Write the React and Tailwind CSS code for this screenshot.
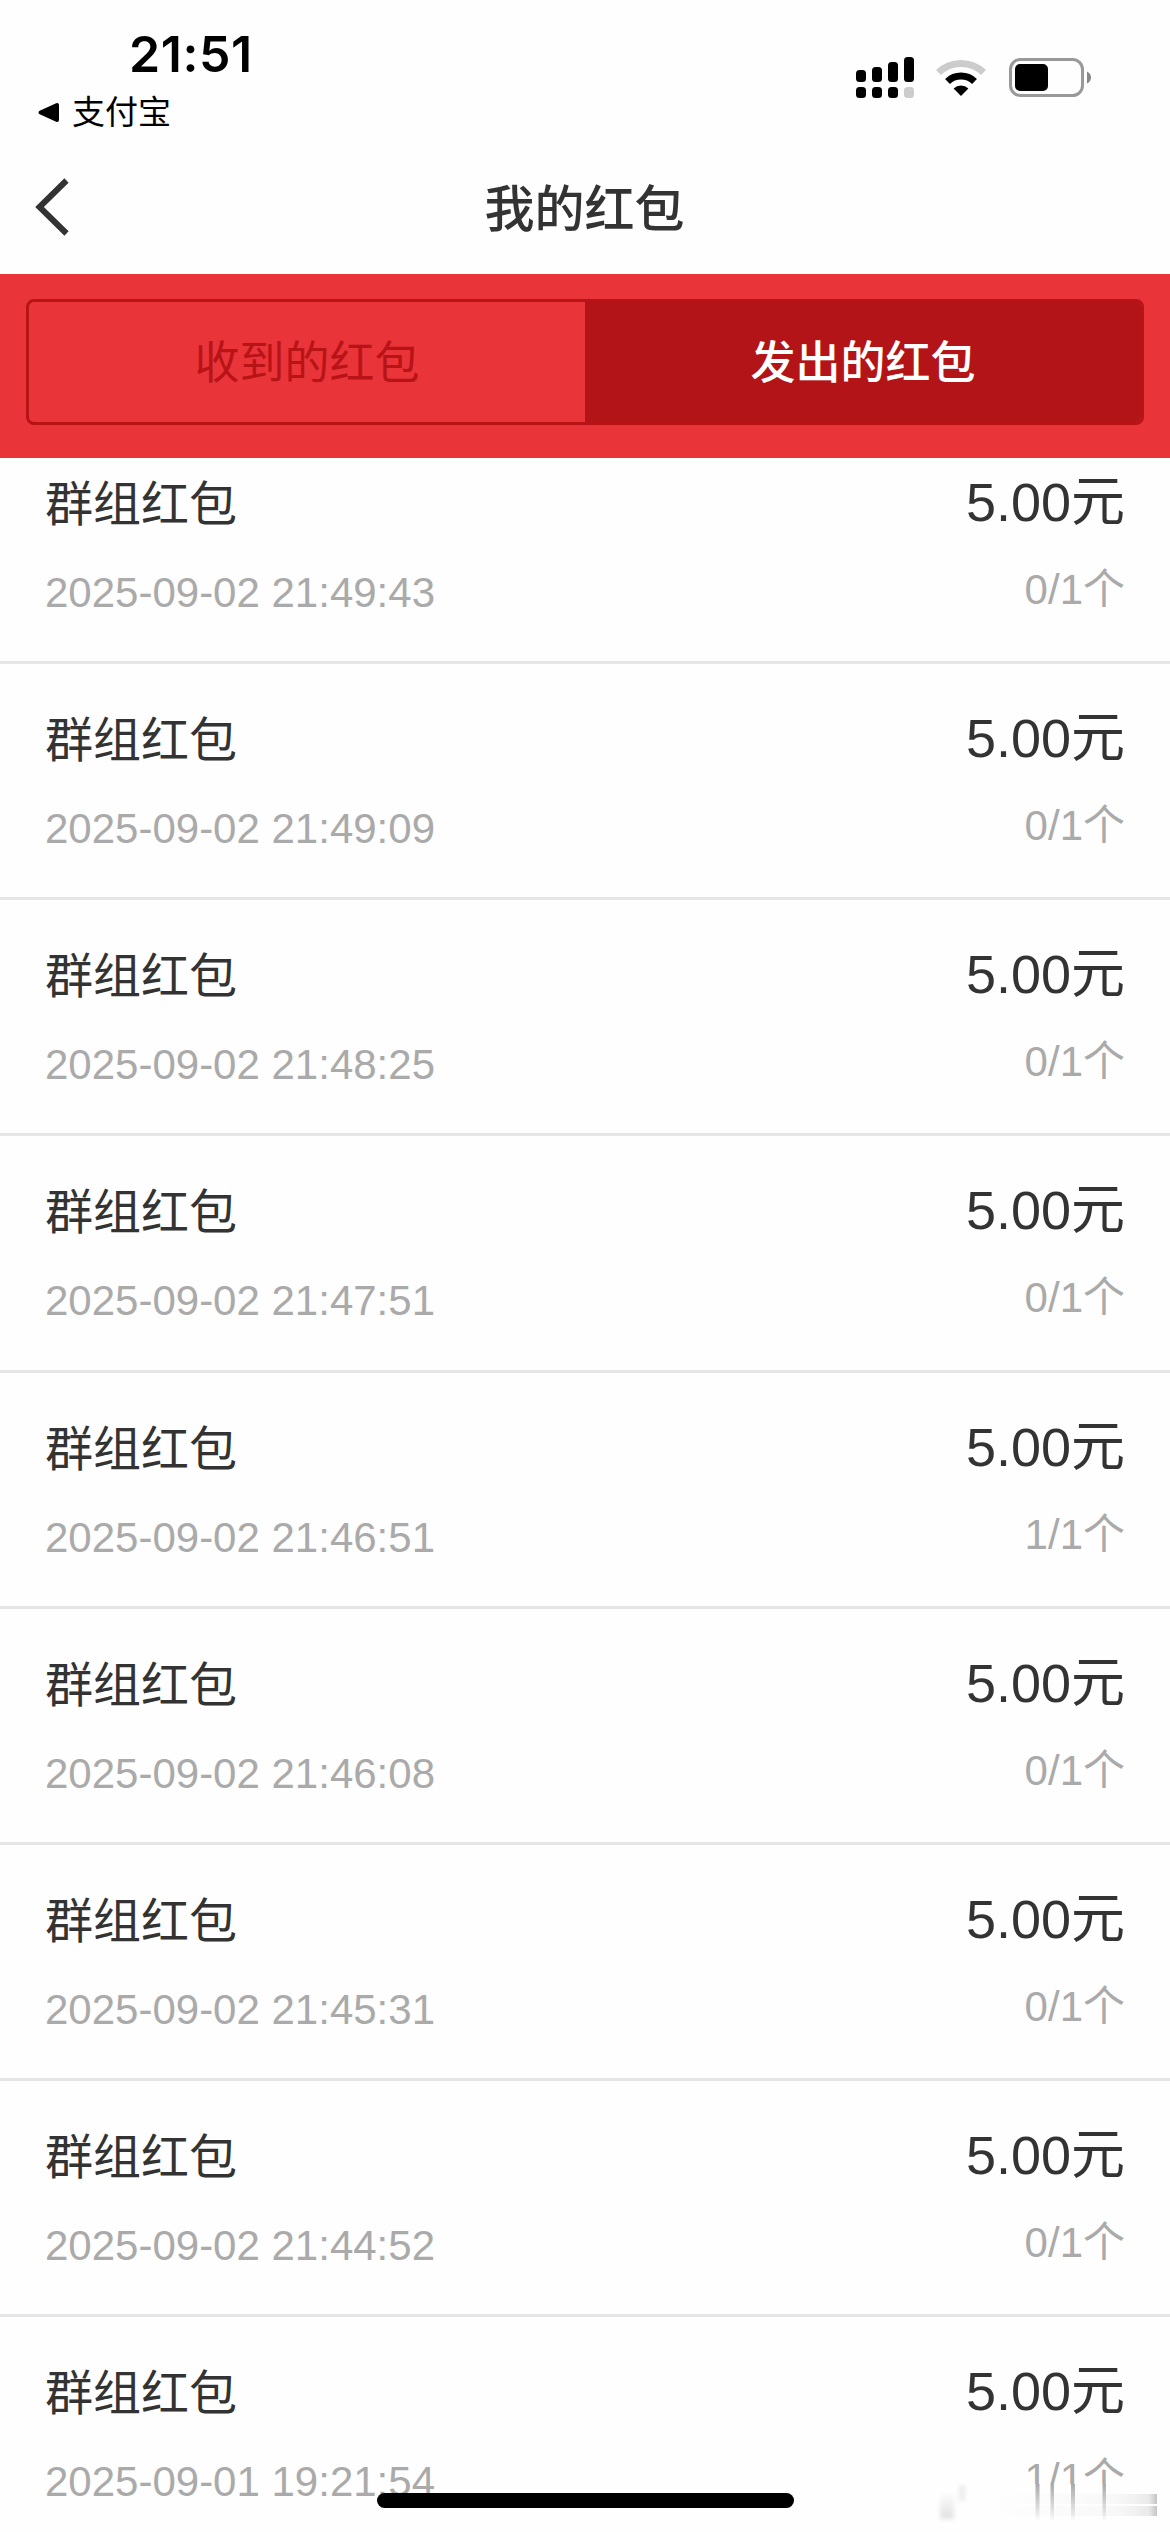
import React from "react";

const packets = [
  { time: "2025-09-02 21:49:43", count: "0/1个" },
  { time: "2025-09-02 21:49:09", count: "0/1个" },
  { time: "2025-09-02 21:48:25", count: "0/1个" },
  { time: "2025-09-02 21:47:51", count: "0/1个" },
  { time: "2025-09-02 21:46:51", count: "1/1个" },
  { time: "2025-09-02 21:46:08", count: "0/1个" },
  { time: "2025-09-02 21:45:31", count: "0/1个" },
  { time: "2025-09-02 21:44:52", count: "0/1个" },
  { time: "2025-09-01 19:21:54", count: "1/1个" },
];

const SignalIcon = () => (
  <svg width="58" height="42" viewBox="0 0 58 42">
    <rect x="0" y="13" width="10" height="12" rx="3.5" />
    <rect x="16" y="10" width="10" height="15" rx="3.5" />
    <rect x="32" y="5" width="10" height="20" rx="3.5" />
    <rect x="48" y="0" width="10" height="25" rx="3.5" />
    <rect x="0" y="30" width="10" height="11" rx="3.5" />
    <rect x="16" y="30" width="10" height="11" rx="3.5" />
    <rect x="32" y="30" width="10" height="11" rx="3.5" />
    <rect x="48" y="30" width="10" height="11" rx="3.5" fill="#ccc" />
  </svg>
);

const WifiIcon = () => (
  <svg width="50" height="38" viewBox="0 0 50 38" fill="none">
    <path d="M2.5 13.5A32.5 32.5 0 0 1 47.5 13.5" stroke="#ccc" strokeWidth="7" />
    <path d="M11.5 22.5A19.5 19.5 0 0 1 38.5 22.5" stroke="#000" strokeWidth="7" />
    <path d="M25 37L17.6 29.6A10.5 10.5 0 0 1 32.4 29.6Z" fill="#000" />
  </svg>
);

const BatteryIcon = () => (
  <svg width="82" height="39" viewBox="0 0 82 39">
    <rect x="1.5" y="1.5" width="72" height="36" rx="10" fill="none" stroke="#999" strokeWidth="3" />
    <rect x="6" y="6" width="33" height="27" rx="5" />
    <path d="M78 13.5Q82 15.5 82 19.5T78 25.5Z" fill="#888" />
  </svg>
);

const StatusBar = () => (
  <div className="h-[140px] flex justify-between text-black">
    <div className="pl-[37px] pt-[24px]">
      <div className="pl-[92px] h-[64px] leading-[60px] text-[50px] font-semibold tracking-[0.6px] font-[Inter,sans-serif]">
        21:51
      </div>
      <div className="flex items-center h-[48px] text-[33px] leading-[48px]">
        <svg width="24" height="21" viewBox="0 0 24 21" className="mr-[11px]">
          <path d="M3.5 10.5L20 3V18Z" stroke="#000" strokeWidth="4" strokeLinejoin="round" />
        </svg>
        <span className="pt-0.5">支付宝</span>
      </div>
    </div>
    <div className="flex items-start pt-[57px] pr-[79px]">
      <SignalIcon />
      <div className="ml-[22px] mt-0.5">
        <WifiIcon />
      </div>
      <div className="ml-[23px] mt-px">
        <BatteryIcon />
      </div>
    </div>
  </div>
);

const NavBar = () => (
  <div className="h-[134px] grid grid-cols-[200px_1fr_200px] items-center">
    <svg width="34" height="58" viewBox="0 0 34 58" fill="none" className="ml-[35px]">
      <path d="M31.5 2.5L4.5 29L31.5 55.5" stroke="#333" strokeWidth="6" />
    </svg>
    <h1 className="pt-[5px] -ml-px text-center text-[50px] leading-[60px] font-medium">我的红包</h1>
  </div>
);

const Tabs = () => (
  <div className="h-[184px] bg-[#e9343a] px-[26px] pt-[25px]">
    <div className="h-[126px] flex rounded-lg overflow-hidden border-3 border-[#b81317] text-[45px]">
      <button className="w-[556px] pt-[3px] text-[#b81317]">收到的红包</button>
      <button className="flex-1 pt-[3px] bg-[#b31418] text-white font-medium">发出的红包</button>
    </div>
  </div>
);

const PacketRow = ({ time, count }) => (
  <li className="h-[236.15px] px-[45px] flex justify-between border-b-3 border-[#e5e5e5]">
    <div className="pt-[47px]">
      <p className="text-[48px] leading-[60px]">群组红包</p>
      <p className="mt-[28px] text-[42px] leading-[60px] text-[#aaa]">{time}</p>
    </div>
    <div className="pt-[44px] text-right">
      <p className="text-[54px] leading-[60px]">5.00元</p>
      <p className="mt-[28px] text-[42px] leading-[60px] text-[#aaa]">{count}</p>
    </div>
  </li>
);

// faded smear over the bottom right corner
const CornerSmear = () => (
  <svg width="240" height="48" viewBox="0 0 240 48" className="absolute right-0 bottom-0">
    <defs>
      <linearGradient id="streak" x1="0" y1="0" x2="0" y2="1">
        <stop offset="0" stopColor="#aaa" />
        <stop offset="1" stopColor="#aaa" stopOpacity="0.05" />
      </linearGradient>
      <linearGradient id="band" x1="0" y1="0" x2="1" y2="0">
        <stop offset="0" stopColor="#ccc" stopOpacity="0" />
        <stop offset="0.75" stopColor="#ccc" stopOpacity="0.12" />
        <stop offset="0.95" stopColor="#bbb" stopOpacity="0.3" />
        <stop offset="1" stopColor="#aaa" stopOpacity="0.7" />
      </linearGradient>
      <linearGradient id="ghost" x1="0" y1="0" x2="0" y2="1">
        <stop offset="0" stopColor="#ddd" stopOpacity="0" />
        <stop offset="1" stopColor="#ddd" stopOpacity="0.9" />
      </linearGradient>
      <filter id="soft" x="-20%" y="-20%" width="140%" height="140%">
        <feGaussianBlur stdDeviation="2" />
      </filter>
    </defs>
    <rect width="240" height="48" fill="#fefefe" />
    <g filter="url(#soft)">
      <rect x="10" y="8" width="14" height="27" fill="url(#ghost)" />
      <rect x="29" y="1" width="6" height="16" fill="#ececec" />
    </g>
    <rect x="60" y="10" width="167" height="10" fill="url(#band)" />
    <rect x="60" y="22" width="167" height="10" fill="url(#band)" />
    <rect x="105.5" y="0" width="4" height="36" fill="url(#streak)" />
    <rect x="120.5" y="0" width="3.5" height="36" fill="url(#streak)" />
    <rect x="141" y="0" width="4" height="36" fill="url(#streak)" />
    <rect x="172.5" y="0" width="3.5" height="36" fill="url(#streak)" />
  </svg>
);

export default function App() {
  return (
    <div className="relative w-[1170px] h-[2532px] flex flex-col overflow-hidden bg-[#fefefe] text-[#333] font-['Liberation_Sans','Noto_Sans_CJK_SC',sans-serif]">
      <StatusBar />
      <NavBar />
      <Tabs />
      <div className="flex-1 min-h-0 overflow-hidden">
        <ul className="-mt-[30px]">
          {packets.map((packet) => (
            <PacketRow key={packet.time} {...packet} />
          ))}
        </ul>
      </div>
      <CornerSmear />
      <div className="absolute left-[377px] bottom-[24px] w-[417px] h-[15px] rounded-full bg-black" />
    </div>
  );
}
